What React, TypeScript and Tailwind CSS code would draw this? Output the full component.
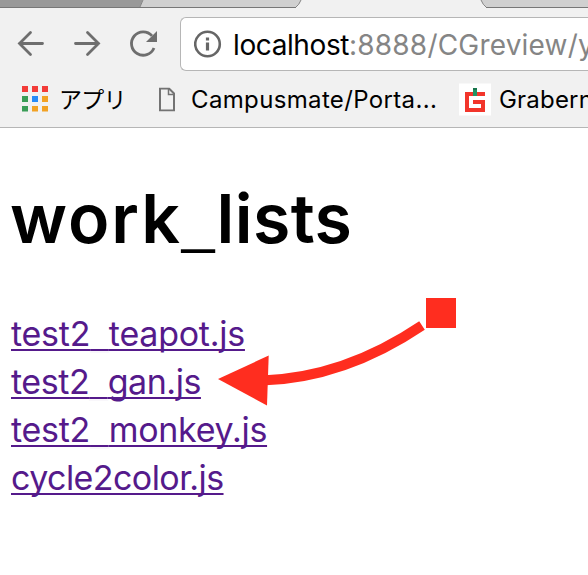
import React from "react";

const links = [
  { start: "test2", end: "teapot.js", spacing: "tracking-[-0.25px]" },
  { start: "test2", end: "gan.js", spacing: "tracking-[-0.45px]" },
  { start: "test2", end: "monkey.js", spacing: "tracking-[-0.28px]" },
  { start: "cycle2color.js", end: "", spacing: "tracking-[-0.57px]" },
];

function TabStrip() {
  return (
    <svg className="block h-2 w-full" viewBox="0 0 588 8">
      <rect width="588" height="8" fill="#f1f1f1" />
      <path d="M0 0H143L140 7H0Z" fill="#999999" />
      <path d="M143 0H301Q299 5 296 7H140Z" fill="#d0d0d0" />
      <path d="M481 0H588V7H486Q483 5 481 0Z" fill="#d0d0d0" />
      <path d="M0 7.5H296M486 7.5H588" stroke="#777" />
      <path d="M143 0L140 7M301 0Q299 5 296 7M481 0Q483 5 486 7" stroke="#858585" fill="none" />
    </svg>
  );
}

function Toolbar() {
  return (
    <div className="flex h-[72px] items-start">
      <svg className="h-[72px] w-[180px] shrink-0" viewBox="0 8 180 72" fill="none" stroke="#6e6e6e" strokeWidth="2.8">
        <path d="M42.5 43.5H19.5M30.5 32.5L19.5 43.5L30.5 54.5" strokeLinecap="round" />
        <path d="M75.5 43.5H98.5M87.5 32.5L98.5 43.5L87.5 54.5" strokeLinecap="round" />
        <path d="M152 35.8A11.7 11.7 0 1 0 154 48" />
        <path d="M157 31V42H146Z" fill="#6e6e6e" stroke="none" />
      </svg>
      <div className="mt-[9px] flex h-[54px] w-[408px] shrink-0 items-center overflow-hidden rounded-l-[6px] border border-r-0 border-[#b6b6b6] bg-white pl-[13px]">
        <svg className="h-7 w-7 shrink-0" viewBox="0 0 28 28" fill="none" stroke="#666">
          <circle cx="13.5" cy="14" r="12.3" strokeWidth="2.6" />
          <path d="M13.5 7.5V10.5M13.5 12.5V20.5" strokeWidth="3.2" />
        </svg>
        <span className="ml-[11px] translate-y-px whitespace-nowrap font-['Inter',sans-serif] text-[28px] leading-none tracking-[0.2px] text-[#858585]"><span className="tracking-[-0.4px] text-black">localhost</span>:8888/CGreview/y</span>
      </div>
    </div>
  );
}

function Bookmarks() {
  return (
    <div className="flex h-12 items-center overflow-hidden border-b border-[#b6b6b6] font-['Inter',sans-serif] text-[24px] text-black">
      <svg className="ml-[22px] h-[26px] w-[26px] shrink-0 -translate-y-[5.5px]" viewBox="0 0 26 26" shapeRendering="crispEdges">
        <path d="M0 0h6v6H0zM10 0h6v6h-6zM20 0h6v6h-6z" fill="#f23c38" />
        <path d="M0 10h6v6H0zM0 20h6v6H0z" fill="#3a9d57" />
        <path d="M10 10h6v6h-6z" fill="#268bf7" />
        <path d="M20 10h6v6h-6zM10 20h6v6h-6zM20 20h6v6h-6z" fill="#f2a224" />
      </svg>
      <span className="ml-[11px] w-[68px] shrink-0 -translate-y-[5.5px] whitespace-nowrap font-['Noto_Sans_CJK_JP',sans-serif] text-[23px] font-normal leading-none tracking-[-0.7px]">アプリ</span>
      <svg className="ml-[32px] h-6 w-4 shrink-0 -translate-y-[4.5px]" viewBox="0 0 16 24" fill="none" stroke="#737373" strokeWidth="2">
        <path d="M1 1H10L15 6V23H1Z" />
        <path d="M9.5 1V7H15" strokeWidth="1.5" />
      </svg>
      <span className="ml-4 w-[252px] shrink-0 -translate-y-[4px] whitespace-nowrap leading-none tracking-[0.35px]">Campusmate/Porta...</span>
      <svg className="ml-4 h-8 w-8 shrink-0 -translate-y-[4.5px] bg-white" viewBox="0 0 32 32" shapeRendering="crispEdges">
        <path d="M6 8H26V12H10V24H22V20H14V16H26V28H6Z" fill="#f2352b" />
        <path d="M14 4H18V12H14Z" fill="#219464" />
        <path d="M14 4H18V6H14Z" fill="#17754b" />
      </svg>
      <span className="ml-[8px] -translate-y-[4px] whitespace-nowrap leading-none tracking-[0.2px]">Grabern</span>
    </div>
  );
}

export default function App() {
  return (
    <main className="relative h-[575px] w-[588px] overflow-hidden bg-white">
      <header className="h-32 bg-[#f1f1f1]">
        <TabStrip />
        <Toolbar />
        <Bookmarks />
      </header>
      <section className="pl-[11px] pt-[47px] font-['Inter',sans-serif]">
        <h1 className="-ml-px h-[86px] whitespace-nowrap text-[68px] font-semibold leading-[86px] tracking-[0.4px] text-black">
          <span className="tracking-[1.9px]">work</span><span className="relative -top-[2px] mr-[1.5px] font-['Liberation_Sans',sans-serif] text-[59px] font-normal leading-none">_</span>lists
        </h1>
        <ul className="mt-[49px]">
          {links.map((link) => (
            <li key={link.start + link.end} className="h-12 whitespace-nowrap text-[34px] leading-[48px] text-[#551a8b]">
              <a href="#" className={`underline decoration-2 underline-offset-[3px] [text-decoration-skip-ink:none] ${link.spacing}`}>
                {link.start}
                {link.end && <span className="font-['Liberation_Sans',sans-serif] text-[#551a8b]/5">_</span>}
                {link.end}
              </a>
            </li>
          ))}
        </ul>
      </section>
      <svg className="pointer-events-none absolute left-[210px] top-[290px] h-[120px] w-[255px]" viewBox="210 290 255 120">
        <path d="M426 298H456V328H426Z" fill="#ff2d1f" />
        <path d="M422 325.5Q344 378 262 380.5" fill="none" stroke="#ff2d1f" strokeWidth="10" />
        <path d="M218 379L268.7 355.5L267 405.5Z" fill="#ff2d1f" />
      </svg>
    </main>
  );
}
